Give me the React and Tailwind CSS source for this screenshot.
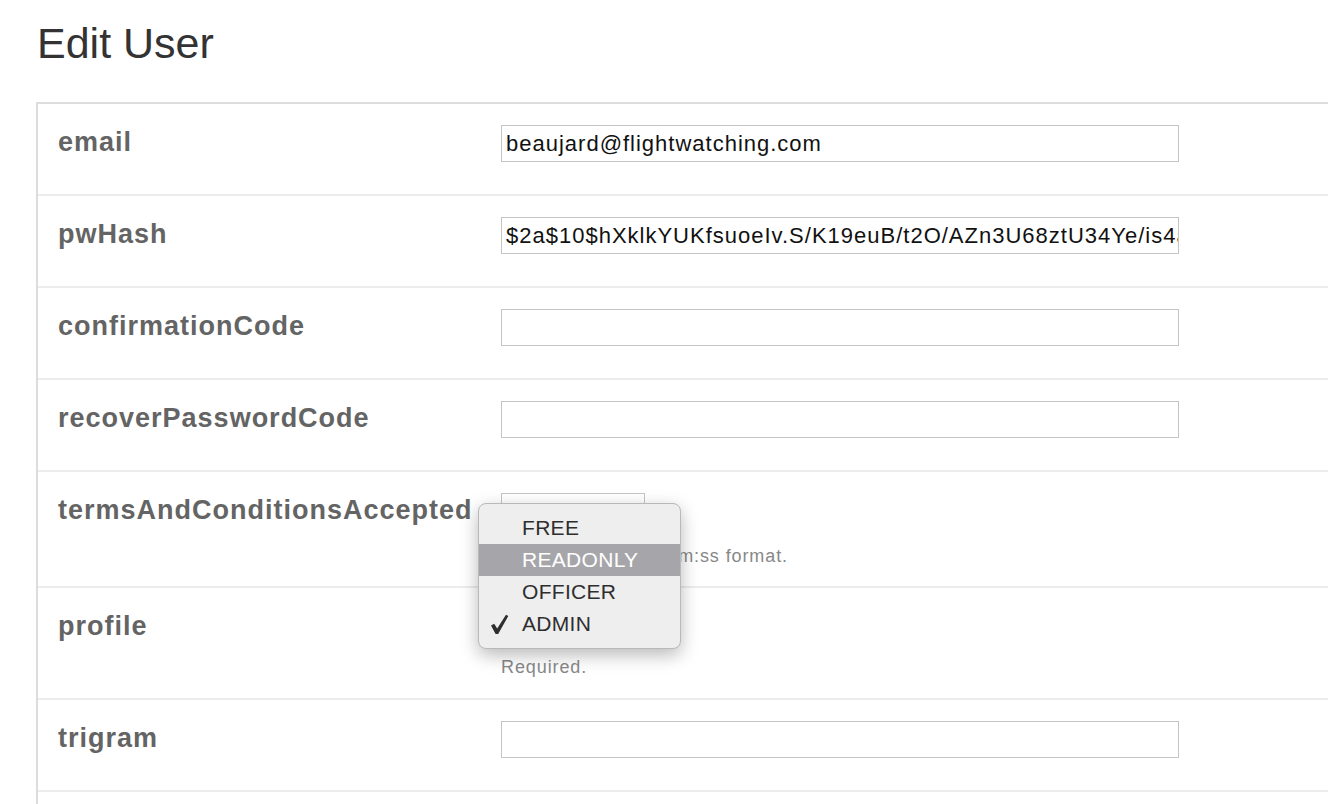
import { useState } from "react";

const fields = [
  { name: "email", value: "beaujard@flightwatching.com", h: "h-[92px]" },
  { name: "pwHash", value: "$2a$10$hXklkYUKfsuoeIv.S/K19euB/t2O/AZn3U68ztU34Ye/is4aQ1pXy", h: "h-[92px]" },
  { name: "confirmationCode", value: "", h: "h-[92px]" },
  { name: "recoverPasswordCode", value: "", h: "h-[92px]" },
];

const profiles = ["FREE", "READONLY", "OFFICER", "ADMIN"];

function Label({ children }) {
  return (
    <div className="w-[463px] shrink-0 pl-[20px] pt-[22px] text-[27px] leading-[33px] font-bold tracking-[1px] text-[#646464]">
      {children}
    </div>
  );
}

function TextInput({ value, onChange, width = "w-[678px]" }) {
  return (
    <input
      type="text"
      value={value}
      onChange={onChange}
      className={`${width} h-[37px] border border-[#c4c4c4] bg-white pl-[4px] text-[22px] tracking-[1px] text-[#111] outline-none`}
    />
  );
}

function Help({ children }) {
  return (
    <p className="mt-[14px] text-[18px] leading-[24px] tracking-[0.9px] text-[#888] whitespace-nowrap">
      {children}
    </p>
  );
}

export default function App() {
  const [values, setValues] = useState(
    Object.fromEntries(fields.map((f) => [f.name, f.value]))
  );
  const [terms, setTerms] = useState("2015-07-31T12:00:00");
  const [trigram, setTrigram] = useState("");
  const [profile, setProfile] = useState("ADMIN");
  const [hover, setHover] = useState("READONLY");

  return (
    <div className="relative h-screen w-full overflow-hidden bg-white font-['Liberation_Sans',Arial,sans-serif]">
      <h1 className="pl-[37px] pt-[20px] text-[43px] leading-[46px] text-[#333]">
        Edit User
      </h1>

      {/* Form panel */}
      <div className="ml-[36px] mt-[36px] w-[1340px] border-t-2 border-l-2 border-[#dcdcdc]">
        {fields.map((f) => (
          <div key={f.name} className={`flex ${f.h} border-b-2 border-[#ececec]`}>
            <Label>{f.name}</Label>
            <div className="pt-[21px]">
              <TextInput
                value={values[f.name]}
                onChange={(e) => setValues({ ...values, [f.name]: e.target.value })}
              />
            </div>
          </div>
        ))}

        <div className="flex h-[116px] border-b-2 border-[#ececec]">
          <Label>termsAndConditionsAccepted</Label>
          <div className="pt-[21px]">
            <TextInput
              value={terms}
              onChange={(e) => setTerms(e.target.value)}
              width="w-[144px]"
            />
            <Help>yyyy-MM-dd'T'HH:mm:ss format.</Help>
          </div>
        </div>

        <div className="flex h-[112px] border-b-2 border-[#ececec]">
          <Label>profile</Label>
          <div className="pt-[21px]">
            <div className="flex h-[32px] w-[180px] items-center rounded-[5px] border border-[#aaa] bg-gradient-to-b from-white to-[#f0f0f0] pl-[20px] text-[21px] text-[#333]">
              {profile}
            </div>
            <Help>Required.</Help>
          </div>
        </div>

        <div className="flex h-[92px] border-b-2 border-[#ececec]">
          <Label>trigram</Label>
          <div className="pt-[21px]">
            <TextInput value={trigram} onChange={(e) => setTrigram(e.target.value)} />
          </div>
        </div>

        <div className="h-[92px]" />
      </div>

      {/* Open select menu */}
      <div className="absolute left-[478px] top-[503px] w-[203px] rounded-[8px] border border-[#b9b9b9] bg-[#eeeeee] py-[8px] shadow-[0_6px_18px_rgba(0,0,0,0.28)]">
        {profiles.map((p) => (
          <div
            key={p}
            onMouseEnter={() => setHover(p)}
            onClick={() => setProfile(p)}
            className={`relative flex h-[32px] items-center pl-[43px] text-[21px] tracking-[0.3px] ${
              hover === p ? "bg-[#a6a6aa] text-white" : "text-[#2e2e2e]"
            }`}
          >
            {profile === p && (
              <svg
                className="absolute left-[11px] top-[6px]"
                width="19"
                height="21"
                viewBox="0 0 19 21"
              >
                <path
                  d="M1 11.5 L4.2 9.8 L7.2 14.5 L16 0.8 L18.3 2 L8.2 20 L5.6 20 Z"
                  fill="currentColor"
                />
              </svg>
            )}
            {p}
          </div>
        ))}
      </div>
    </div>
  );
}
